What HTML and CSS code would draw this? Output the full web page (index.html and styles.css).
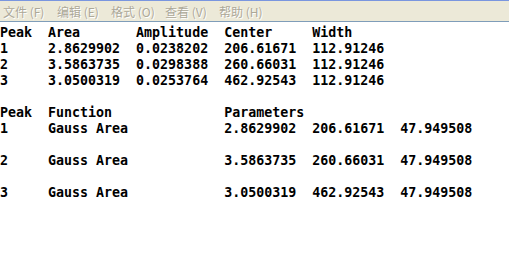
FILE: index.html
```html
<!DOCTYPE html>
<html>
<head>
<meta charset="utf-8">
<link rel="stylesheet" href="styles.css">
</head>
<body>
<div class="menubar">
  <span class="menu-item">文件 (F)</span>
  <span class="menu-item">编辑 (E)</span>
  <span class="menu-item">格式 (O)</span>
  <span class="menu-item">查看 (V)</span>
  <span class="menu-item">帮助 (H)</span>
</div>
<pre class="doc">Peak  Area       Amplitude  Center     Width
1     2.8629902  0.0238202  206.61671  112.91246
2     3.5863735  0.0298388  260.66031  112.91246
3     3.0500319  0.0253764  462.92543  112.91246

Peak  Function              Parameters
1     Gauss Area            2.8629902  206.61671  47.949508

2     Gauss Area            3.5863735  260.66031  47.949508

3     Gauss Area            3.0500319  462.92543  47.949508</pre>
</body>
</html>
```
FILE: styles.css
```css
html, body {
  margin: 0;
  padding: 0;
  background: #ffffff;
}
.menubar {
  height: 20px;
  background: #ece9d8;
  border-top: 1px solid #7a96df;
  border-bottom: 1px solid #7f9db9;
  display: flex;
  align-items: center;
  gap: 10px;
  padding-left: 3px;
  font-family: "Noto Sans CJK SC", "DejaVu Sans", sans-serif;
  font-size: 12px;
}
.menu-item {
  color: #aca899;
  text-shadow: 1px 1px 0 #ffffff;
  width: 44px;
  white-space: nowrap;
}
.doc {
  margin: 0;
  padding-top: 3px;
  font-family: "DejaVu Sans Mono", monospace;
  font-weight: bold;
  font-size: 13.3px;
  line-height: 16px;
  color: #000000;
}
```
